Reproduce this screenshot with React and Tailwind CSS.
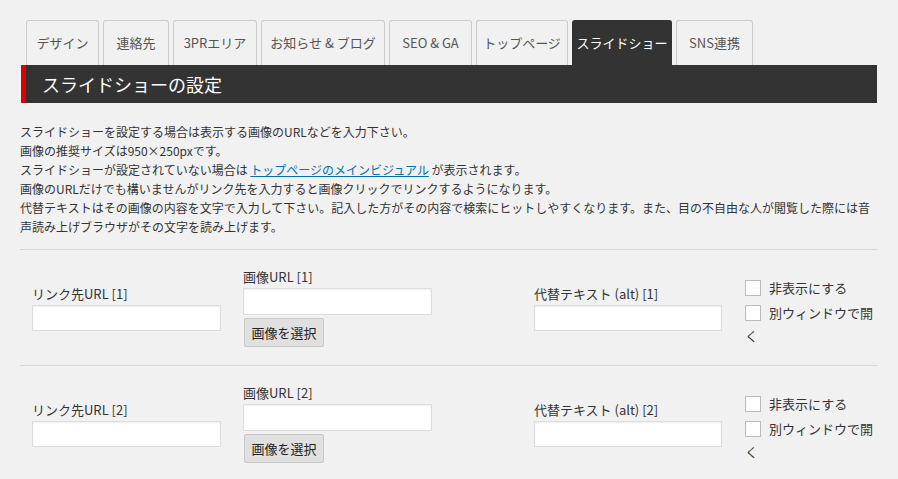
export default function App() {
  const tabs = ["デザイン", "連絡先", "3PRエリア", "お知らせ & ブログ", "SEO & GA", "トップページ", "スライドショー", "SNS連携"];
  const widths = ["w-[73px]", "w-[66px]", "w-[84px]", "w-[124px]", "w-[83px]", "w-[92px]", "w-[100px]", "w-[77px]"];
  const font = { fontFamily: '"Noto Sans CJK JP", "Noto Sans", sans-serif' };
  const Row = ({ n }) => (
    <div className="flex items-start h-[116px] border-b border-[#d8d8d8]">
      <div className="ml-[12px] mt-[34px] w-[189px]">
        <div className="text-[13px] leading-[19px] text-[#333] mb-[2px]">リンク先URL [{n}]</div>
        <div className="h-[26px] bg-white border border-[#ddd] shadow-[inset_0_1px_2px_rgba(0,0,0,0.07)]" />
      </div>
      <div className="ml-[22px] mt-[17px] w-[189px]">
        <div className="text-[13px] leading-[19px] text-[#333] mb-[2px]">画像URL [{n}]</div>
        <div className="h-[27px] bg-white border border-[#ddd] shadow-[inset_0_1px_2px_rgba(0,0,0,0.07)]" />
        <div className="mt-[3px] ml-[1px] w-[80px] h-[29px] bg-[#e0e0e0] border border-[#c8c8c8] rounded-[2px] text-[13px] text-[#222] flex items-center justify-center">画像を選択</div>
      </div>
      <div className="ml-[102px] mt-[34px] w-[188px]">
        <div className="text-[13px] leading-[19px] text-[#333] mb-[2px]">代替テキスト (alt) [{n}]</div>
        <div className="h-[26px] bg-white border border-[#ddd] shadow-[inset_0_1px_2px_rgba(0,0,0,0.07)]" />
      </div>
      <div className="ml-[23px] mt-[25px] text-[13px] text-[#333]">
        <div className="flex items-center gap-[8px] h-[25px]"><span className="w-[16px] h-[16px] bg-white border border-[#bbb]" />非表示にする</div>
        <div className="flex items-center gap-[8px] h-[25px]"><span className="w-[16px] h-[16px] bg-white border border-[#bbb]" />別ウィンドウで開</div>
        <div className="h-[22px] leading-[22px]">く</div>
      </div>
    </div>
  );
  return (
    <div className="w-[898px] h-[479px] bg-[#f1f1f1] overflow-hidden" style={font}>
      <div className="flex gap-[4px] pl-[26px] pt-[20px]">
        {tabs.map((t, i) => (
          <div key={t} className={`${widths[i]} h-[45px] rounded-t-[3px] border border-b-0 flex items-center justify-center text-[13px] ${i === 6 ? "bg-[#333] border-[#333] text-white" : "bg-[#f1f1f1] border-[#ccc] text-[#555]"}`}>{t}</div>
        ))}
      </div>
      <div className="mx-[21px] w-[856px] h-[38px] bg-[#333] border-l-[5px] border-[#dd0000] flex items-center pl-[16px] text-white text-[18px]">スライドショーの設定</div>
      <div className="mx-[20px] mt-[19px] text-[12px] leading-[19px] text-[#333]">
        <p>スライドショーを設定する場合は表示する画像のURLなどを入力下さい。</p>
        <p>画像の推奨サイズは950×250pxです。</p>
        <p>スライドショーが設定されていない場合は <a className="text-[#0073aa] underline">トップページのメインビジュアル</a> が表示されます。</p>
        <p>画像のURLだけでも構いませんがリンク先を入力すると画像クリックでリンクするようになります。</p>
        <p>代替テキストはその画像の内容を文字で入力して下さい。記入した方がその内容で検索にヒットしやすくなります。また、目の不自由な人が閲覧した際には音声読み上げブラウザがその文字を読み上げます。</p>
      </div>
      <div className="mx-[20px] mt-[13px] border-t border-[#d8d8d8]">
        <Row n={1} />
        <Row n={2} />
      </div>
    </div>
  );
}
